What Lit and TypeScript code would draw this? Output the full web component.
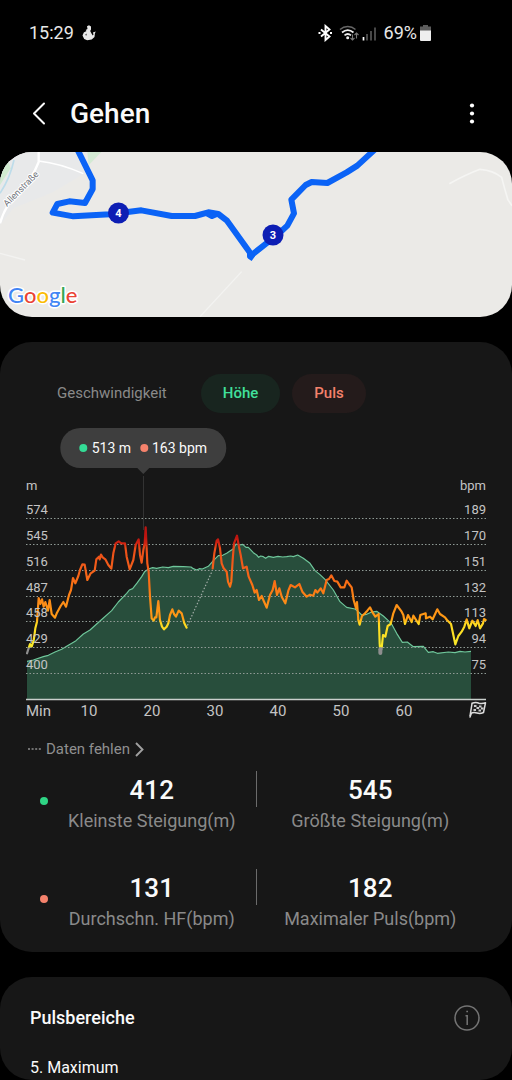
import { LitElement, html, svg, css } from "lit";
import { customElement, state } from "lit/decorators.js";

// Chart samples, in thirds of a chart unit.
const ELEVATION =
  "81,484 100,480 130,470 145,466 165,456 185,448 205,436 228,422 250,402 270,390 300,363 335,332 355,306 380,280 388,270 398,266 412,248 425,230 434,215 445,207 458,203 470,205 488,201 505,203 520,199 550,200 573,201 580,206 590,210 598,206 607,207 625,199 640,182 655,167 668,166 680,160 700,146 708,132 718,135 728,133 738,142 745,142 760,158 770,165 776,172 782,168 790,170 797,175 806,169 820,172 834,169 848,171 860,170 872,168 880,170 893,165 910,175 930,190 945,212 960,224 975,238 1000,270 1020,305 1040,322 1065,327 1075,335 1085,345 1100,343 1115,336 1130,334 1150,348 1165,362 1176,374 1190,400 1207,427 1222,426 1240,440 1270,439 1285,457 1300,455 1312,460 1345,456 1365,458 1380,454 1395,456 1413,454";

const PULSE_BEFORE_GAP =
  "81,460 90,432 95,440 101,422 106,385 111,365 116,294 121,312 126,298 131,320 136,306 144,332 149,300 155,342 165,353 171,338 182,318 190,306 198,320 207,285 213,270 219,234 226,250 235,228 240,210 247,193 254,194 262,240 272,220 284,212 289,178 297,170 299,178 303,164 308,172 316,178 325,195 334,206 340,160 347,130 356,124 364,130 375,130 380,170 389,208 400,180 407,135 416,118 420,165 425,188 430,150 434,130 437,82 442,190 446,215 450,290 455,355 461,362 465,352 469,352 475,303 480,360 486,380 492,388 500,380 505,370 510,345 517,328 522,342 528,350 536,332 545,340 553,370 560,383";

const PULSE_AFTER_GAP =
  "638,205 643,160 650,122 654,118 660,145 665,190 671,205 680,215 684,245 690,260 694,245 698,180 702,130 711,107 716,135 722,165 729,205 740,200 746,230 757,255 764,278 770,270 777,300 785,288 790,300 800,323 810,285 818,270 824,243 831,285 838,265 845,290 856,310 865,272 872,255 885,262 898,252 907,275 920,290 930,284 940,287 946,270 952,278 962,265 970,280 980,240 987,237 994,226 1003,243 1012,245 1022,262 1033,262 1040,242 1047,252 1055,262 1061,300 1068,325 1071,306 1075,360 1079,374 1086,348 1095,340 1102,332 1110,322 1118,338 1126,350 1136,342 1139,430 1141,458 1145,445 1149,405 1156,410 1163,378 1172,372 1180,340 1190,315 1205,335 1210,345 1215,372 1224,345 1235,366 1240,347 1256,372 1261,345 1277,340 1278,355 1290,350 1298,358 1312,328 1320,342 1335,352 1341,360 1353,372 1366,433 1375,408 1385,395 1393,380 1400,358 1408,385 1417,362 1427,378 1433,360 1440,385 1449,370 1452,357 1457,360";

const METRES = [574, 545, 516, 487, 458, 429, 400];
const BEATS = [189, 170, 151, 132, 113, 94, 75];
const MINUTES = [10, 20, 30, 40, 50, 60];
const ROW = 26;

@customElement("status-bar")
class StatusBar extends LitElement {
  static styles = css`
    :host {
      display: flex;
      align-items: center;
      justify-content: space-between;
      height: 66px;
      padding: 0 81px 0 29px;
      font-size: 18px;
      line-height: 24px;
      color: #e8e8e8;
    }
    .group { display: flex; align-items: center; }
    .left { gap: 8px; }
    .icons { display: block; margin-right: 6px; }
    .battery { display: block; margin-left: 3px; }
  `;
  render() {
    return html`
      <div class="group left">
        <span>15:29</span>
        <svg width="14" height="16" viewBox="0 0 14 16" fill="#e8e8e8" aria-hidden="true">
          <path d="M5 1.200 7 .3l2 1.200v3L8.200 6l1.300 2.500 1.200 2 .8-1-.6-2 2.800-1-.8 2-.4 3.500-2.800 2.500-4.500.7-3-1.200L.5 10.500l1.300-3L4.500 6l-.8-1 1.800-1z" />
          <path d="M3.200 10 4.500 8.500v2z" fill="#000" />
        </svg>
      </div>
      <div class="group">
        <svg class="icons" width="60" height="18" viewBox="0 0 60 18" fill="none" aria-hidden="true">
          <path d="M3 5.500 11.500 12.500 7.500 16V2l4 3.500L3 12.500" stroke="#fff" stroke-width="1.900" />
          <path d="M.5 9h2M12 9h2" stroke="#fff" stroke-width="2" />
          <path d="M22 5.500c4.500-4 11-4 15.500 0" stroke="#666" stroke-width="1.500" />
          <path d="M24 8.500c3.500-3 8-3 11.500 0M26.500 11.300c2-1.600 4.500-1.600 6.500 0" stroke="#eee" stroke-width="1.700" />
          <circle cx="29.700" cy="13.700" r="1.500" fill="#eee" />
          <path d="M34.500 10.500v5.500m-2-2 2 2 2-2M38.500 14.500V9m-2 2 2-2 2 2" stroke="#777" stroke-width="1.100" />
          <path d="M45.500 13v3.500" stroke="#fff" stroke-width="1.700" />
          <path d="M49 10v6.500M53 7v9.500M57 3.500v13" stroke="#555" stroke-width="1.700" />
        </svg>
        <span>69%</span>
        <svg class="battery" width="11" height="16" viewBox="0 0 11 16" aria-hidden="true">
          <path d="M3 0h5v1.500h3V6H0V1.500h3z" fill="#5c5c5c" />
          <path d="M0 5.500h11V15a1 1 0 0 1-1 1H1a1 1 0 0 1-1-1z" fill="#eee" />
        </svg>
      </div>
    `;
  }
}

@customElement("route-map")
class RouteMap extends LitElement {
  static styles = css`
    :host { display: block; border-radius: 32px; overflow: hidden; background: #ebeae7; }
    .map { display: block; width: 100%; height: auto; }
    .street { font: 9px Roboto, sans-serif; fill: #6d7078; stroke: #fff; stroke-width: 2px; paint-order: stroke; }
    .km { font: 700 11px Roboto, sans-serif; fill: #fff; text-anchor: middle; }
    .brand { font: 500 22px Lato, sans-serif; stroke: #fff; stroke-width: 3px; paint-order: stroke; stroke-linejoin: round; }
    .b { fill: #4285f4; }
    .r { fill: #ea4335; }
    .y { fill: #fbbc05; }
    .g { fill: #34a853; }
  `;
  render() {
    return html`
      <svg class="map" viewBox="0 0 512 165" role="img" aria-label="Route">
        <g transform="scale(.33333) translate(0 -21)" fill="none">
          <path d="M0 21h240l20 60-100 60L40 190 0 240z" fill="#e8e9ea" />
          <path d="M262 21h42l-38 40z" fill="#d3ead3" />
          <path d="M0 75 25 50 32 70 0 120z" fill="#d0ead0" />
          <path d="M42 45Q30 100 0 145" stroke="#bddcea" stroke-width="5" />
          <path d="M116 21v30Q95 105 60 135 15 180 0 235" stroke="#fff" stroke-width="7" />
          <path d="M116 48Q180 55 250 86" stroke="#fff" stroke-width="4" />
          <path d="M0 325 75 345M725 380 600 515" stroke="#f3f3f1" stroke-width="4" />
          <path d="M1348 116Q1400 88 1440 73 1480 76 1505 97 1512 125 1524 165L1536 182" transform="translate(-512 0) translate(512 0)" stroke="#f5f5f3" stroke-width="5" />
          <g stroke="#0b63f6" stroke-width="18" stroke-linejoin="round">
            <path d="M233 15 278 106V132L255 174 208 169 172 177 158 203 220 214 330 208 424 196 515 213H585L625 202 655 207 680 226 755 330 835 267 862 242 882 205 874 164 917 120 935 111 982 114 1040 82 1072 62 1125 13" />
            <path d="M622 206 636 213 650 207M750 322V334L760 341" />
          </g>
        </g>
        <circle cx="118.500" cy="61" r="10.500" fill="#0d1eb4" />
        <circle cx="273" cy="83" r="10.500" fill="#0d1eb4" />
        <text class="km" x="118.500" y="65">4</text>
        <text class="km" x="273" y="87">3</text>
        <text class="street" transform="translate(7 55) rotate(-45)">Allenstraße</text>
        <text class="brand" x="8" y="151"><tspan class="b">G</tspan><tspan class="r">o</tspan><tspan class="y">o</tspan><tspan class="b">g</tspan><tspan class="g">l</tspan><tspan class="r">e</tspan></text>
      </svg>
    `;
  }
}

@customElement("workout-chart")
class WorkoutChart extends LitElement {
  static styles = css`
    :host { display: block; position: relative; padding-top: 48px; }
    .tooltip {
      position: absolute;
      top: 0;
      left: 28%;
      transform: translateX(-50%);
      display: flex;
      align-items: center;
      gap: 4px;
      height: 40px;
      padding: 0 19px;
      border-radius: 20px;
      background: #3e3e3e;
      font-size: 14px;
      line-height: 20px;
      color: #fafafa;
      white-space: nowrap;
    }
    .tooltip::after {
      content: "";
      position: absolute;
      top: 100%;
      left: 50%;
      margin-left: -6px;
      border: 6px solid transparent;
      border-top-color: #3e3e3e;
      border-bottom: 0;
    }
    .dot { width: 8px; height: 8px; border-radius: 50%; background: #34dc96; }
    .dot.pulse { background: #f5826c; margin-left: 5px; }
    .chart { display: block; width: 100%; height: auto; }
    .axis { font: 13px Roboto, sans-serif; fill: #c4c4c4; }
    .minutes { font: 15px Roboto, sans-serif; fill: #c4c4c4; }
    .end { text-anchor: end; }
    .mid { text-anchor: middle; }
    .grid { stroke: #8f9a95; stroke-dasharray: 1.500 2; }
  `;
  render() {
    return html`
      <div class="tooltip">
        <span class="dot"></span><span>513 m</span>
        <span class="dot pulse"></span><span>163 bpm</span>
      </div>
      <svg class="chart" viewBox="0 476 512 250" role="img" aria-label="Höhe und Puls">
        <defs>
          <linearGradient id="zones" gradientUnits="userSpaceOnUse" x1="0" y1="0" x2="0" y2="500">
            <stop offset=".22" stop-color="#bd1410" />
            <stop offset=".26" stop-color="#cf2412" />
            <stop offset=".29" stop-color="#ea4c18" />
            <stop offset=".42" stop-color="#f4601a" />
            <stop offset=".52" stop-color="#fb7314" />
            <stop offset=".6" stop-color="#fb8a18" />
            <stop offset=".71" stop-color="#ff9a14" />
            <stop offset=".74" stop-color="#ffd820" />
            <stop offset=".88" stop-color="#f8ea2a" />
            <stop offset=".89" stop-color="#8e8e8e" />
          </linearGradient>
        </defs>
        <path d="M143.500 470V530" stroke="#333" />
        <g transform="translate(0 500) scale(.33333)" fill="none" stroke-linejoin="round">
          <polygon points="81,599 ${ELEVATION} 1413,599" fill="#284e3c" />
          <polyline points=${ELEVATION} stroke="#6fc79b" stroke-width="3.500" />
        </g>
        ${METRES.map((_, i) => svg`<path class="grid" d="M26 ${518.5 + i * ROW - (i > 3 ? 1 : 0)}H486" />`)}
        <g transform="translate(0 500) scale(.33333)" fill="none" stroke-linejoin="round" stroke-linecap="round">
          <path d="M563 375 637 212" stroke="#a0aaa5" stroke-width="4" stroke-dasharray="1 9" />
          <polyline points=${PULSE_BEFORE_GAP} stroke="url(#zones)" stroke-width="6.500" />
          <polyline points=${PULSE_AFTER_GAP} stroke="url(#zones)" stroke-width="6.500" />
          <path d="M1141 448V459" stroke="#8e8e8e" stroke-width="12" />
        </g>
        <path d="M26 699.500H486" stroke="#c9cfcc" stroke-width="1.500" />
        <text class="axis" x="26" y="490">m</text>
        <text class="axis end" x="486" y="490">bpm</text>
        ${METRES.map((v, i) => svg`<text class="axis" x="26" y=${514 + i * ROW - (i > 3 ? 1 : 0)}>${v}</text>`)}
        ${BEATS.map((v, i) => svg`<text class="axis end" x="486" y=${514 + i * ROW - (i > 3 ? 1 : 0)}>${v}</text>`)}
        <text class="minutes" x="26" y="716">Min</text>
        ${MINUTES.map((v, i) => svg`<text class="minutes mid" x=${89 + i * 63} y="716">${v}</text>`)}
        <g transform="translate(469 702)">
          <path d="M3 1.200Q7 0 10 1.200 13 2 16.500 .8L14.500 10.500Q11 12 8 11 5 10 2.500 11L1 15" fill="#222" stroke="#ddd" stroke-width="1.500" stroke-linejoin="round" stroke-linecap="round" />
          <path d="M3 1.500 1 14" stroke="#ddd" stroke-width="1.500" />
          <path d="M5 3h2.500v2H5zM10 3.500h2.500v2H10zM7.500 5H10v2H7.500zM12 5.500h2.500v2H12zM4.500 7H7v2H4.500zM9.500 7.500H12v2H9.500z" fill="#ccc" />
        </g>
      </svg>
    `;
  }
}

@customElement("app-root")
class AppRoot extends LitElement {
  static styles = css`
    :host {
      display: block;
      min-height: 100vh;
      background: #000;
      font-family: Roboto, sans-serif;
      color: #fafafa;
    }
    button { font: inherit; color: inherit; background: none; border: 0; padding: 0; margin: 0; cursor: pointer; }
    h1, h2, p, dl, dd, dt { margin: 0; }
    .appbar { display: flex; align-items: center; height: 86px; padding: 10px 28px 0; box-sizing: border-box; }
    .icon { display: flex; width: 24px; height: 32px; align-items: center; justify-content: center; }
    .title { flex: 1; margin-left: 18px; font-size: 28px; line-height: 36px; font-weight: 500; }
    .main { display: flex; flex-direction: column; gap: 25px; }
    .card { background: #171717; border-radius: 32px; }
    .tabs { display: flex; gap: 12px; padding: 32px 35px 15px; }
    .tab { height: 39px; padding: 0 22px; border-radius: 20px; font-size: 15px; line-height: 39px; color: #8a8a8a; }
    .tab.height { background: #18251f; color: #41e09c; font-weight: 500; }
    .tab.pulse { background: #241b1b; color: #f5826c; font-weight: 500; }
    .missing { display: flex; align-items: center; gap: 5px; margin: 12px 28px 11px; font-size: 15px; line-height: 22px; color: #8f8f8f; }
    .stats { display: grid; gap: 36px; padding: 0 28px 21px; }
    .stat { display: grid; grid-template-columns: 1fr 1px 1fr; }
    .marked { display: flex; }
    .dot { width: 8px; height: 8px; margin: 26px 0 0 12px; border-radius: 50%; background: #2fd585; }
    .dot.pulse { background: #f5826c; }
    .rule { height: 36px; background: #6b6b6b; }
    .figure { flex: 1; display: flex; flex-direction: column-reverse; text-align: center; }
    .figure dt { font-size: 18px; line-height: 24px; color: #8a8a8a; }
    .figure dd { font-size: 26px; line-height: 38px; font-weight: 500; }
    .zones { padding: 27px 30px 0; }
    .zonehead { display: flex; align-items: center; justify-content: space-between; margin-bottom: 24px; }
    .zonehead h2 { font-size: 18px; line-height: 28px; font-weight: 500; }
    .zone { font-size: 16px; line-height: 24px; }
    svg { display: block; }
  `;

  @state() private series: Record<string, boolean> = { height: true, pulse: true };

  private toggle(key: string) {
    this.series = { ...this.series, [key]: !this.series[key] };
  }

  private figure(label: string, value: number) {
    return html`<dl class="figure"><dt>${label}</dt><dd>${value}</dd></dl>`;
  }

  private stat(kind: string, a: [string, number], b: [string, number]) {
    return html`
      <div class="stat">
        <div class="marked"><span class="dot ${kind}"></span>${this.figure(...a)}</div>
        <span class="rule"></span>
        ${this.figure(...b)}
      </div>
    `;
  }

  render() {
    const { height, pulse } = this.series;
    return html`
      <status-bar></status-bar>
      <header class="appbar">
        <button class="icon" aria-label="Zurück">
          <svg width="16" height="24" viewBox="0 0 16 24" fill="none" stroke="#fafafa" stroke-width="2" stroke-linecap="round" stroke-linejoin="round"><path d="M12 1.500 2 11.500 12 21.500" /></svg>
        </button>
        <h1 class="title">Gehen</h1>
        <button class="icon" aria-label="Weitere Optionen">
          <svg width="6" height="22" viewBox="0 0 6 22" fill="#fff"><circle cx="3" cy="2.500" r="2.100" /><circle cx="3" cy="10.500" r="2.100" /><circle cx="3" cy="18.500" r="2.100" /></svg>
        </button>
      </header>
      <main class="main">
        <route-map></route-map>
        <section class="card">
          <div class="tabs">
            <button class="tab">Geschwindigkeit</button>
            <button class="tab ${height ? "height" : ""}" aria-pressed=${height} @click=${() => this.toggle("height")}>Höhe</button>
            <button class="tab ${pulse ? "pulse" : ""}" aria-pressed=${pulse} @click=${() => this.toggle("pulse")}>Puls</button>
          </div>
          <workout-chart></workout-chart>
          <button class="missing">
            <svg width="13" height="2" viewBox="0 0 13 2"><path d="M0 1h13" stroke="#8f8f8f" stroke-width="1.500" stroke-dasharray="2 1.600" /></svg>
            <span>Daten fehlen</span>
            <svg width="9" height="15" viewBox="0 0 9 15" fill="none" stroke="#a0a0a0" stroke-width="1.900"><path d="m1 1 6.500 6.500L1 14" /></svg>
          </button>
          <div class="stats">
            ${this.stat("height", ["Kleinste Steigung(m)", 412], ["Größte Steigung(m)", 545])}
            ${this.stat("pulse", ["Durchschn. HF(bpm)", 131], ["Maximaler Puls(bpm)", 182])}
          </div>
        </section>
        <section class="card zones">
          <div class="zonehead">
            <h2>Pulsbereiche</h2>
            <button aria-label="Info">
              <svg width="28" height="26" viewBox="-1 0 28 26" fill="none" stroke="#747474" stroke-width="1.500"><circle cx="12" cy="13" r="12" /><path d="M10.500 10.800H12.200V20M11.300 6.500H13" /></svg>
            </button>
          </div>
          <p class="zone">5. Maximum</p>
        </section>
      </main>
    `;
  }
}
